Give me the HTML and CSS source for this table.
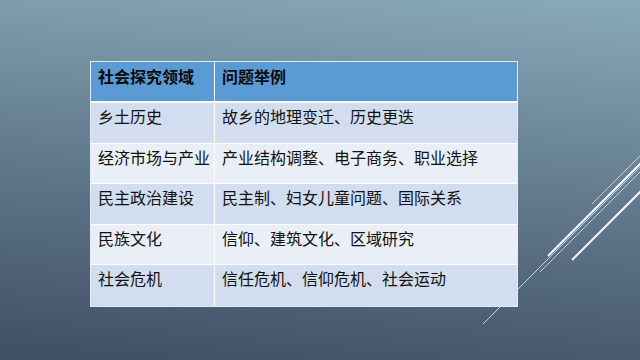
FILE: index.html
```html
<!DOCTYPE html>
<html lang="zh-CN">
<head>
<meta charset="utf-8">
<title>社会探究领域</title>
<link rel="stylesheet" href="styles.css">
</head>
<body>
<div class="slide">
  <svg class="trails" width="640" height="360" viewBox="0 0 640 360" aria-hidden="true">
    <line x1="592" y1="204" x2="646" y2="150" class="thin"/>
    <line x1="548" y1="256" x2="646" y2="158" class="thick"/>
    <line x1="483" y1="324" x2="646" y2="161" class="thin"/>
    <line x1="540" y1="272" x2="646" y2="166" class="thin"/>
    <line x1="572" y1="260" x2="646" y2="186" class="thick"/>
  </svg>
  <table class="grid">
    <thead>
      <tr><th>社会探究领域</th><th>问题举例</th></tr>
    </thead>
    <tbody>
      <tr><td>乡土历史</td><td>故乡的地理变迁、历史更迭</td></tr>
      <tr><td>经济市场与产业</td><td>产业结构调整、电子商务、职业选择</td></tr>
      <tr><td>民主政治建设</td><td>民主制、妇女儿童问题、国际关系</td></tr>
      <tr><td>民族文化</td><td>信仰、建筑文化、区域研究</td></tr>
      <tr><td>社会危机</td><td>信任危机、信仰危机、社会运动</td></tr>
    </tbody>
  </table>
</div>
</body>
</html>
```

FILE: styles.css
```css
html, body {
  margin: 0;
  padding: 0;
}
body {
  width: 640px;
  height: 360px;
  overflow: hidden;
}
.slide {
  position: relative;
  width: 640px;
  height: 360px;
  box-sizing: border-box;
  padding: 61px 0 0 90px;
  background: linear-gradient(5deg, #3e4e65 0%, #62798d 50%, #88aabb 100%);
  font-family: "Noto Sans CJK SC", "Noto Sans", sans-serif;
}
.trails {
  position: absolute;
  left: 0;
  top: 0;
  z-index: 0;
}
.trails line {
  stroke-linecap: butt;
}
.trails .thin {
  stroke: #dbe4ea;
  stroke-width: 1;
  opacity: 0.85;
}
.trails .thick {
  stroke: #f4f7f9;
  stroke-width: 2;
}
.grid {
  position: relative;
  z-index: 1;
  width: 428px;
  border-collapse: separate;
  border-spacing: 0;
  border: 1px solid #e4ebf2;
  table-layout: fixed;
}
.grid th,
.grid td {
  text-align: left;
  vertical-align: top;
  white-space: nowrap;
  font-size: 16px;
  line-height: 22px;
  padding: 2px 0 0 7px;
  color: #111;
  border-bottom: 1px solid #ffffff;
  box-sizing: border-box;
}
.grid th:first-child,
.grid td:first-child {
  width: 124px;
  border-right: 1px solid #ffffff;
}
.grid th {
  height: 41px;
  padding-top: 3px;
  font-weight: bold;
  background: #5b9bd5;
  color: #0a0a0a;
  border-bottom: 2px solid #ffffff;
}
.grid td {
  height: 40.6px;
  font-weight: normal;
}
.grid tbody tr:nth-child(odd) td {
  background: #d2deef;
}
.grid tbody tr:nth-child(even) td {
  background: #eaeff7;
}
.grid tbody tr:last-child td {
  border-bottom: none;
}
```
